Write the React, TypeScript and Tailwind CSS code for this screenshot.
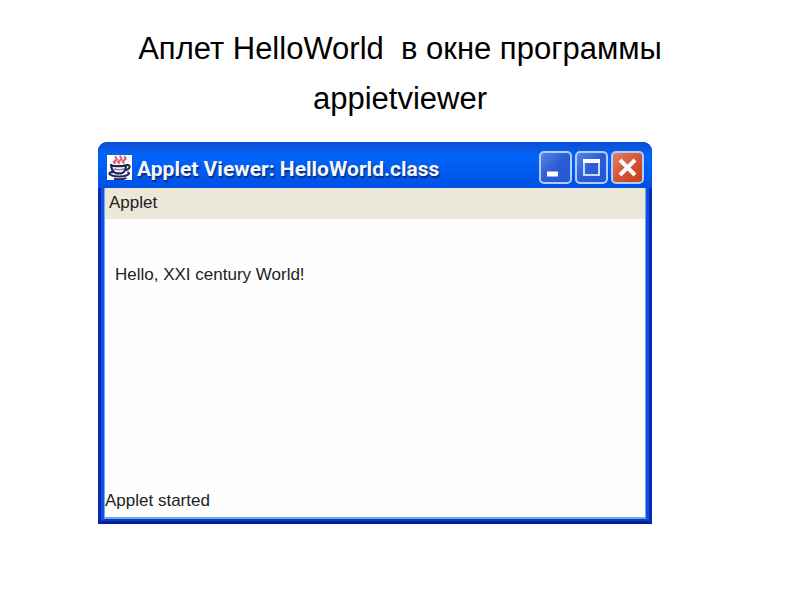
import type { ReactNode } from 'react';
import clsx from 'clsx';

const JavaIcon = () => (
  <svg viewBox="0 0 16 16" className="h-[25px] w-[25px] shrink-0" fill="none" aria-hidden="true">
    <rect width="16" height="16" fill="#fff" />
    {/* Steam */}
    <path d="M5.5 5.6 4.4 4.4l2-1.6L5.2.8M8.2 5.6 7 4.4l2.4-1.8L8.200.4M11 5.400 10 4.200l2-1.800L11 .6" stroke="#d9626e" strokeWidth="1.3" />
    {/* Cup and handle */}
    <path d="M2.6 6.2c1.2 1.3 8.2 1.3 9.4 0M2.6 5.800c0 3.200 1.200 5.200 3.400 6h3.200c2.200-.8 3-3 3-5.800" stroke="#25255c" strokeWidth="1.4" />
    <path d="M12.3 6.400c3-.6 3.200 2.600-1 3.400" stroke="#25255c" strokeWidth="1.3" />
    <path d="M4.5 8.800c2 .8 4.600.8 6.200 0" stroke="#8084ae" />
    {/* Saucer */}
    <path d="M4.2 10.8c-3.400.4-3.400 1.600-1 2.300 2.400.8 6.800.8 9.200 0 2-.6 2.200-1.600.6-2M4.500 15.200c2.500.5 5.500.4 8-.4" stroke="#25255c" strokeWidth="1.3" />
  </svg>
);

interface CaptionButtonProps {
  label: string;
  danger?: boolean;
  children: ReactNode;
}

const CaptionButton = ({ label, danger, children }: CaptionButtonProps) => (
  <button
    type="button"
    aria-label={label}
    className={clsx(
      'h-[33px] w-[33px] rounded-[5px] border-2 border-[#b4cdf8] bg-linear-to-br',
      danger ? 'from-[#e08068] via-[#d65434] to-[#c43e1c]' : 'from-[#5684ea] via-[#2c5cd4] to-[#2257d8]'
    )}
  >
    <svg viewBox="0 0 29 29" className="h-full w-full" fill="none">
      {children}
    </svg>
  </button>
);

const TitleBar = () => (
  <header className="flex h-[46px] items-center gap-[5px] bg-linear-to-b from-[#0a4fd0] via-[#0364fb] via-30% to-[#0050e4] pt-[5px] pr-2 pl-[9px]">
    <JavaIcon />
    <h2 className="flex-1 pt-[2px] font-['Roboto',sans-serif] text-[21px] leading-6 font-bold whitespace-nowrap text-[#f4f8ff] [text-shadow:1px_2px_1px_#0a2a80]">
      Applet Viewer: HelloWorld.class
    </h2>
    <div className="flex gap-[3px]">
      <CaptionButton label="Minimize">
        <path d="M6 21h11" stroke="#fff" strokeWidth="5" />
      </CaptionButton>
      <CaptionButton label="Maximize">
        <path d="M7 7v15h15V7" stroke="#c8dafc" strokeWidth="2" />
        <path d="M6 8h17" stroke="#fff" strokeWidth="4" />
      </CaptionButton>
      <CaptionButton label="Close" danger>
        <path d="m7 7 15 15M22 7 7 22" stroke="#fff" strokeWidth="4" />
      </CaptionButton>
    </div>
  </header>
);

const AppletWindow = () => (
  <section className="mr-[148px] ml-[98px] overflow-hidden rounded-t-[9px] bg-[#0831c8] font-['Liberation_Sans',Arial,sans-serif] text-[#222]">
    <TitleBar />
    <div className="border-x-3 border-b-3 border-x-[#0428b8] border-b-[#041f98]">
      <div className="border-x-3 border-b-2 border-x-[#1450e0] border-b-[#0c3cc4]">
        <div className="flex flex-col border-x border-b-2 border-[#6fa8f0] bg-[#fefefe]">
          <nav className="h-[31px] bg-[#ebe8d8] px-1 pt-px">
            <button type="button" className="text-[17px] leading-7">Applet</button>
          </nav>
          <main className="px-[10px] pt-11 pb-[202px]">
            <p className="text-[17px] leading-6">Hello, XXI century World!</p>
          </main>
          <footer className="pb-1 text-[17px] leading-6">Applet started</footer>
        </div>
      </div>
    </div>
  </section>
);

export default function App() {
  return (
    <div className="min-h-screen bg-white">
      <h1 className="px-4 pt-6 pb-[18px] text-center font-['Liberation_Sans',Arial,sans-serif] text-[31px] leading-[50px] text-black">
        Аплет HelloWorld&nbsp; в окне программы
        <br />
        appietviewer
      </h1>
      <AppletWindow />
    </div>
  );
}
